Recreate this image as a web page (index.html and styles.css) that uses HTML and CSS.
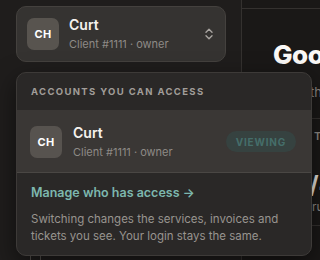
FILE: index.html
```html
<!doctype html>
<html lang="en">
  <head>
    <meta charset="UTF-8" />
    <meta name="viewport" content="width=device-width, initial-scale=1.0" />
    <title>Client Portal</title>
    <link rel="stylesheet" href="styles.css">
  </head>
  <body>
    <aside class="sidebar">
      <button class="switcher" type="button">
        <span class="avatar">CH</span>
        <span class="who">
          <span class="name">Curt</span>
          <span class="meta">Client #1111 · owner</span>
        </span>
        <svg class="chevrons" width="8" height="12" viewBox="0 0 8 12" fill="none" stroke="currentColor" stroke-width="1.4" stroke-linecap="round" stroke-linejoin="round">
          <path d="M1 4.2 4 1.2 7 4.2" />
          <path d="M1 7.8 4 10.8 7 7.8" />
        </svg>
      </button>
      <div class="nav-stub"><span class="box"></span></div>

      <div class="popup">
        <div class="popup-head">Accounts you can access</div>
        <div class="account">
          <span class="avatar">CH</span>
          <span class="who">
            <span class="name">Curt</span>
            <span class="meta">Client #1111 · owner</span>
          </span>
          <span class="badge">Viewing</span>
        </div>
        <div class="popup-foot">
          <a class="manage" href="#">Manage who has access →</a>
          <p>Switching changes the services, invoices and tickets you see. Your login stays the same.</p>
        </div>
      </div>
    </aside>

    <main class="main">
      <div class="topbar"></div>
      <h1>Good morning</h1>
      <p class="sub">Everything is running</p>
      <section class="card">
        <div class="card-label">Tickets</div>
        <div class="card-value">1/4</div>
        <div class="card-note">running</div>
      </section>
    </main>
  </body>
</html>
```

FILE: styles.css
```css
* {
  box-sizing: border-box;
}

html,
body {
  margin: 0;
  height: 100%;
}

body {
  font-family: Inter, "Noto Sans", sans-serif;
  background: #1a1817;
  color: #f2efec;
  display: flex;
  overflow: hidden;
}

.sidebar {
  position: relative;
  width: 242px;
  flex: none;
  background: #1f1d1c;
  border-right: 1px solid #34312f;
  padding: 6px 15px 0 16px;
}

.switcher {
  width: 210px;
  height: 56px;
  display: flex;
  align-items: center;
  gap: 10px;
  padding: 0 12px 0 10px;
  background: #353331;
  border: 1px solid #44413e;
  border-radius: 10px;
  color: inherit;
  font: inherit;
  text-align: left;
}

.avatar {
  width: 32px;
  height: 32px;
  flex: none;
  display: flex;
  align-items: center;
  justify-content: center;
  border-radius: 7px;
  background: #58544f;
  color: #fff;
  font-size: 11px;
  font-weight: 700;
  letter-spacing: 0.3px;
}

.who {
  display: flex;
  flex-direction: column;
  gap: 3px;
  flex: 1;
  min-width: 0;
}

.name {
  font-size: 14px;
  font-weight: 600;
  color: #f5f2ef;
  line-height: 18px;
}

.meta {
  font-size: 11px;
  color: #8e8a86;
  line-height: 15px;
}

.chevrons {
  color: #a9a5a1;
  flex: none;
}

.nav-stub {
  padding: 190px 0 0 14px;
}

.box {
  display: block;
  width: 11px;
  height: 11px;
  border: 1px solid #55514d;
  border-radius: 2px;
}

.popup {
  position: absolute;
  top: 72px;
  left: 16px;
  width: 296px;
  height: 184px;
  background: #2a2827;
  border: 1px solid #3d3a38;
  border-radius: 10px;
  overflow: hidden;
  box-shadow: 0 8px 24px rgba(0, 0, 0, 0.5);
  z-index: 2;
}

.popup-head {
  height: 38px;
  display: flex;
  align-items: center;
  padding: 0 14px;
  font-size: 9.5px;
  font-weight: 700;
  letter-spacing: 1.35px;
  text-transform: uppercase;
  color: #a19d99;
  border-bottom: 1px solid #3a3735;
}

.account {
  height: 62px;
  display: flex;
  align-items: center;
  gap: 11px;
  padding: 0 15px 0 13px;
  background: #3a3735;
  border-bottom: 1px solid #4a4744;
}

.account .avatar {
  background: #57534f;
}

.badge {
  height: 21px;
  padding: 0 10px;
  display: flex;
  align-items: center;
  border-radius: 11px;
  background: #364240;
  color: #456e6a;
  font-size: 10px;
  font-weight: 700;
  letter-spacing: 0.8px;
  text-transform: uppercase;
}

.popup-foot {
  padding: 11px 14px 0;
}

.manage {
  display: block;
  color: #7db7ae;
  font-size: 12.5px;
  font-weight: 600;
  text-decoration: none;
  line-height: 18px;
}

.popup-foot p {
  margin: 9px 0 0;
  font-size: 11.5px;
  line-height: 17px;
  color: #98948f;
}

.main {
  flex: 1;
  min-width: 0;
  display: flex;
  flex-direction: column;
  white-space: nowrap;
  overflow: hidden;
}

.topbar {
  height: 9px;
  flex: none;
  border-bottom: 1px solid #34312f;
}

.main h1 {
  margin: 31px 0 0 31px;
  font-size: 26px;
  font-weight: 800;
  letter-spacing: -0.5px;
  color: #fbf9f7;
  line-height: 30px;
}

.sub {
  margin: 14px 0 0 33px;
  font-size: 13px;
  color: #8e8a86;
}

.card {
  margin: 18px 0 0 14px;
  height: 108px;
  border-top: 1px solid #34312f;
  border-bottom: 1px solid #34312f;
  padding: 11px 0 0 58px;
  line-height: 1.2;
}

.card-label {
  font-size: 11px;
  font-weight: 600;
  letter-spacing: 1.4px;
  text-transform: uppercase;
  color: #8e8a86;
}

.card-value {
  margin: 28px 0 0 -15px;
  font-size: 24px;
  font-weight: 700;
  color: #e4e0dc;
}

.card-note {
  margin: 0 0 0 -2px;
  font-size: 12px;
  color: #8e8a86;
}
```
